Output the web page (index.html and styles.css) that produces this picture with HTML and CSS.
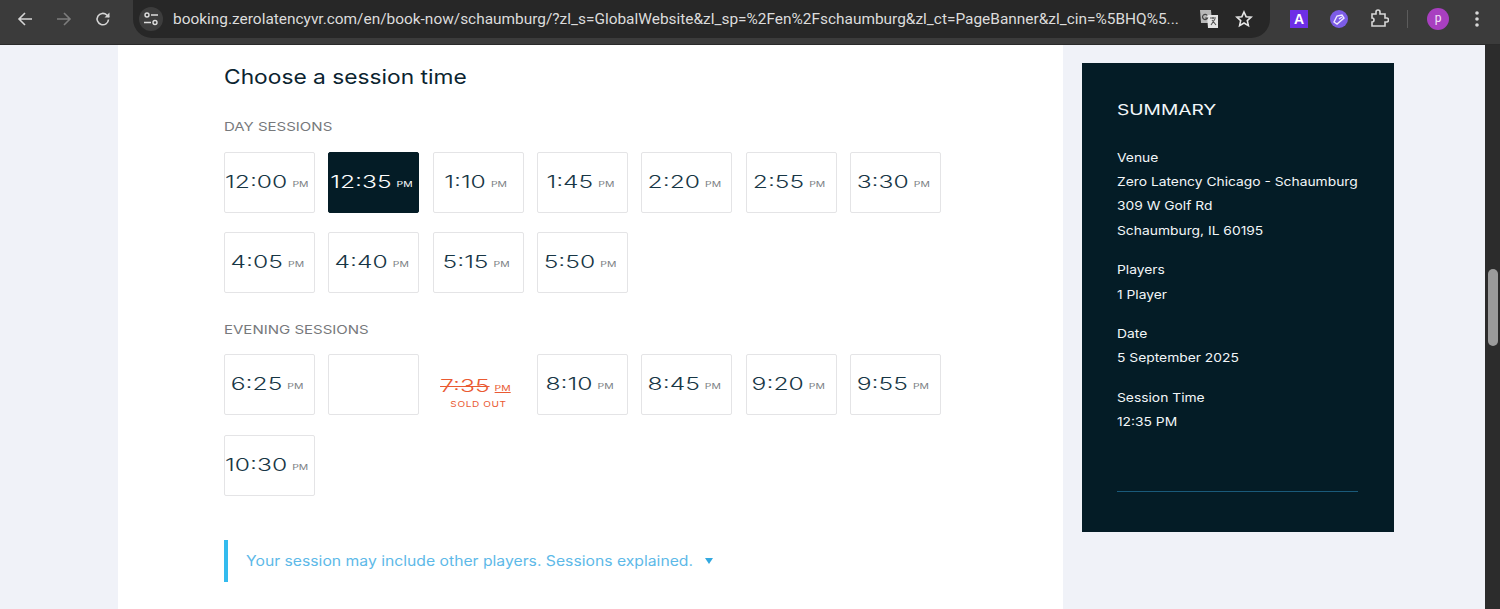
FILE: index.html
```html
<!DOCTYPE html>
<html lang="en">
<head>
<meta charset="utf-8">
<title>Book now</title>
<link rel="stylesheet" href="styles.css">
</head>
<body>
<header class="toolbar">
  <div class="nav">
    <svg class="ico" width="18" height="18" viewBox="0 0 18 18"><path d="M16 9H3M9 3L3 9l6 6" fill="none" stroke="#d5d5d5" stroke-width="1.6"/></svg>
    <svg class="ico" width="18" height="18" viewBox="0 0 18 18"><path d="M2 9h13M9 3l6 6-6 6" fill="none" stroke="#7d7d7d" stroke-width="1.6"/></svg>
    <svg class="ico" width="18" height="18" viewBox="0 0 18 18"><path d="M14.5 9.5A5.7 5.7 0 1 1 12.8 5L15 7" fill="none" stroke="#d5d5d5" stroke-width="1.6"/><path d="M15.5 2.5v5h-5z" fill="#d5d5d5"/></svg>
  </div>
  <div class="omnibox">
    <span class="tune">
      <svg width="16" height="16" viewBox="0 0 16 16"><circle cx="4" cy="4" r="2" fill="none" stroke="#ddd" stroke-width="1.4"/><path d="M8 4h7M1 11.500h7" stroke="#ddd" stroke-width="1.500"/><circle cx="12" cy="11.500" r="2" fill="none" stroke="#ddd" stroke-width="1.4"/></svg>
    </span>
    <span class="url">booking.zerolatencyvr.com/en/book-now/schaumburg/?zl_s=GlobalWebsite&amp;zl_sp=%2Fen%2Fschaumburg&amp;zl_ct=PageBanner&amp;zl_cin=%5BHQ%5...</span>
    <svg class="translate" width="20" height="20" viewBox="0 0 20 20"><path d="M1 1h11l1 13H2z" fill="#b8b8b8"/><path d="M8 6h11v13H9z" fill="#e4e4e4"/><path d="M11 9h6M14 8v2M12 16l4-6M13 11l4 5" stroke="#555" stroke-width="1.100" fill="none"/><path d="M8.300 6.500A2.600 2.600 0 1 0 8.500 9H6.200" fill="none" stroke="#444" stroke-width="1.200"/></svg>
    <svg class="star" width="18" height="18" viewBox="0 0 18 18"><path d="M9 2l2.100 4.700 5 .5-3.800 3.400 1.100 5L9 13l-4.400 2.600 1.100-5L1.900 7.200l5-.5z" fill="none" stroke="#e6e6e6" stroke-width="1.600"/></svg>
  </div>
  <div class="exts">
    <span class="ext-a">A</span>
    <svg width="18" height="18" viewBox="0 0 18 18"><circle cx="9" cy="9" r="9" fill="#7c5ce6"/><path d="M4 12l3 2 7-6-2-3-5 1zM9 9l3-2" fill="none" stroke="#efe9ff" stroke-width="1.400"/></svg>
    <svg width="20" height="20" viewBox="0 0 20 20"><path d="M3 6h4V4a2 2 0 0 1 4 0v2h5v4h1.500a2 2 0 0 1 0 4H16v4H3v-4a2 2 0 0 0 0-4V6z" transform="translate(0 -1)" fill="none" stroke="#d8d8d8" stroke-width="1.600"/></svg>
    <span class="sep"></span>
    <span class="avatar">p</span>
    <svg width="6" height="18" viewBox="0 0 6 18"><circle cx="3" cy="3" r="1.800" fill="#d8d8d8"/><circle cx="3" cy="9" r="1.800" fill="#d8d8d8"/><circle cx="3" cy="15" r="1.800" fill="#d8d8d8"/></svg>
  </div>
</header>
<div class="page">
  <main class="panel">
    <h1 class="title">Choose a session time</h1>
    <h2 class="group">DAY SESSIONS</h2>
    <div class="slots">
      <button class="slot"><span class="t"><b>12:00</b><i>PM</i></span></button>
      <button class="slot active"><span class="t"><b>12:35</b><i>PM</i></span></button>
      <button class="slot"><span class="t"><b>1:10</b><i>PM</i></span></button>
      <button class="slot"><span class="t"><b>1:45</b><i>PM</i></span></button>
      <button class="slot"><span class="t"><b>2:20</b><i>PM</i></span></button>
      <button class="slot"><span class="t"><b>2:55</b><i>PM</i></span></button>
      <button class="slot"><span class="t"><b>3:30</b><i>PM</i></span></button>
      <button class="slot"><span class="t"><b>4:05</b><i>PM</i></span></button>
      <button class="slot"><span class="t"><b>4:40</b><i>PM</i></span></button>
      <button class="slot"><span class="t"><b>5:15</b><i>PM</i></span></button>
      <button class="slot"><span class="t"><b>5:50</b><i>PM</i></span></button>
    </div>
    <h2 class="group evening">EVENING SESSIONS</h2>
    <div class="slots late">
      <button class="slot"><span class="t"><b>6:25</b><i>PM</i></span></button>
      <button class="slot"></button>
      <button class="slot sold"><span class="t"><b>7:35</b><i>PM</i></span><small>SOLD OUT</small></button>
      <button class="slot"><span class="t"><b>8:10</b><i>PM</i></span></button>
      <button class="slot"><span class="t"><b>8:45</b><i>PM</i></span></button>
      <button class="slot"><span class="t"><b>9:20</b><i>PM</i></span></button>
      <button class="slot"><span class="t"><b>9:55</b><i>PM</i></span></button>
      <button class="slot"><span class="t"><b>10:30</b><i>PM</i></span></button>
    </div>
    <p class="note"><span class="note-text">Your session may include other players. Sessions explained.</span><em class="caret"></em></p>
  </main>
  <aside class="summary">
    <h2 class="sum-title">SUMMARY</h2>
    <dl class="sum-group"><dt>Venue</dt><dd>Zero Latency Chicago - Schaumburg</dd><dd>309 W Golf Rd</dd><dd>Schaumburg, IL 60195</dd></dl>
    <dl class="sum-group"><dt>Players</dt><dd>1 Player</dd></dl>
    <dl class="sum-group"><dt>Date</dt><dd>5 September 2025</dd></dl>
    <dl class="sum-group"><dt>Session Time</dt><dd>12:35 PM</dd></dl>
    <div class="sum-rule"></div>
  </aside>
  <div class="scrollbar"><span class="thumb"></span></div>
</div>
</body>
</html>
```
FILE: styles.css
```css
* { box-sizing: border-box; }
html, body { margin: 0; padding: 0; height: 609px; overflow: hidden; }
body { font-family: "Inter", "DejaVu Sans", sans-serif; background: #f0f2f8; color: #0b2430; }
.toolbar { height: 45px; background: #3b3b3b; display: flex; align-items: flex-start; border-bottom: 1px solid #2a2a2a; }
.nav { width: 133px; height: 38px; padding-left: 16px; display: flex; align-items: center; gap: 21px; flex: none; }
.ico { flex: none; }
.omnibox { width: 1137px; height: 38px; background: #272727; border-radius: 0 0 19px 19px; display: flex; align-items: center; padding-left: 6px; flex: none; }
.tune { width: 24px; height: 24px; border-radius: 50%; background: #3d3d3d; display: flex; align-items: center; justify-content: center; flex: none; }
.url { margin-left: 10px; width: 1025px; font: 15.430px "Roboto", sans-serif; color: #dcdcdc; white-space: nowrap; overflow: hidden; }
.translate { margin-left: 1px; flex: none; }
.star { margin-left: 16px; flex: none; }
.exts { display: flex; align-items: center; height: 38px; padding-left: 20px; flex: 1; }
.exts svg { flex: none; }
.ext-a { width: 18px; height: 18px; background: #6d2ee6; color: #fff; font: bold 14px/18px "Liberation Sans", sans-serif; text-align: center; flex: none; }
.exts svg:nth-of-type(1) { margin-left: 22px; }
.exts svg:nth-of-type(2) { margin-left: 21px; }
.sep { width: 1px; height: 18px; background: #5c5c5c; margin: 0 19px 0 18px; flex: none; }
.avatar { width: 22px; height: 22px; border-radius: 50%; background: #a83fc0; color: #f4e4f8; font: 12px/21px "Roboto", sans-serif; text-align: center; flex: none; }
.exts svg:last-child { margin-left: 25px; }
.page { display: flex; height: 564px; padding-left: 118px; }
.panel { width: 945px; height: 564px; background: #fff; padding: 0 0 0 106px; flex: none; }
.title { margin: 20px 0 0; font-size: 20px; line-height: 24px; font-weight: 400; color: #0b2430; transform: scaleX(1.138); transform-origin: left; white-space: nowrap; }
.group { margin: 30px 0 0; font-size: 12px; line-height: 16px; font-weight: 400; color: #77797c; transform: scaleX(1.25); transform-origin: left; white-space: nowrap; }
.group.evening { margin-top: 29px; }
.slots { display: grid; grid-template-columns: repeat(7, 91px); column-gap: 13.330px; row-gap: 19px; margin-top: 17px; width: 717px; }
.slots.late { row-gap: 20px; margin-top: 16px; }
.slot { height: 61px; background: #fff; border: 1px solid #e4e4e6; border-radius: 2px; padding: 0; display: flex; flex-direction: column; align-items: center; justify-content: center; font-family: inherit; color: #173645; white-space: nowrap; }
.t { display: flex; align-items: center; gap: 3.500px; margin-right: 5px; transform: scaleX(1.45); }
.t b { font-size: 17px; font-weight: 300; margin-top: -2px; }
.t i { font-size: 7.200px; font-style: normal; color: #7b8084; margin-top: 3px; }
.slot.active { background: #041c26; border-color: #041c26; color: #fff; }
.slot.active .t i { color: #fff; }
.slot.sold { border-color: transparent; color: #ea5a32; padding-top: 15px; }
.sold .t b { text-decoration: line-through; text-decoration-thickness: 1px; margin-top: 0; }
.sold .t i { color: #ea5a32; text-decoration: underline; margin-top: 5px; }
.sold small { font-size: 8px; letter-spacing: .5px; margin-top: 3px; transform: scaleX(1.25); }
.note { margin: 44px 0 0; height: 42px; border-left: 4px solid #33bbee; padding-left: 18px; display: flex; align-items: center; font-size: 14px; color: #5db9e8; }
.note-text { transform: scaleX(1.123); transform-origin: left; white-space: nowrap; margin-top: -2px; }
.caret { width: 0; height: 0; border: 4px solid transparent; border-top: 6px solid #33a9e0; border-bottom: 0; margin-left: 60.500px; }
.summary { width: 312px; height: 469px; margin: 18px 0 0 19px; background: #041c26; color: #f2f6f8; padding: 37px 36px 0 35px; flex: none; }
.sum-title { margin: 0 0 26px; font-size: 14px; line-height: 20px; font-weight: 400; transform: scaleX(1.37); transform-origin: left; }
.sum-group { margin: 0 0 15.500px; font-size: 12px; line-height: 24.200px; transform: scaleX(1.152); transform-origin: left; }
.sum-group dt { font-weight: 400; }
.sum-group dd { margin: 0; white-space: nowrap; }
.sum-rule { margin-top: 56px; height: 1px; background: #1a5a7a; }
.scrollbar { width: 15px; height: 564px; background: #2c2c2c; margin-left: auto; flex: none; position: relative; }
.thumb { position: absolute; left: 3px; top: 224px; width: 10px; height: 77px; border-radius: 5px; background: #9b9b9b; }
```
